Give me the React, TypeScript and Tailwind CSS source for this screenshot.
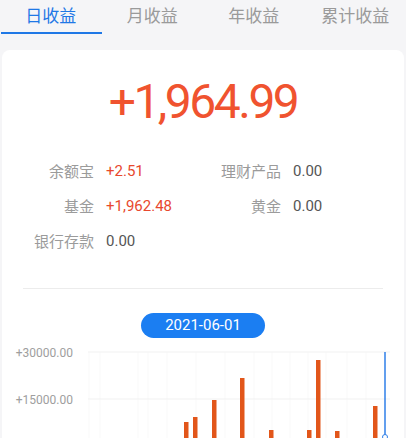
import React from 'react';

const TABS = ['日收益', '月收益', '年收益', '累计收益'];

const ROWS: { label: string; value: string; red?: boolean }[][] = [
  [
    { label: '余额宝', value: '+2.51', red: true },
    { label: '理财产品', value: '0.00' },
  ],
  [
    { label: '基金', value: '+1,962.48', red: true },
    { label: '黄金', value: '0.00' },
  ],
  [{ label: '银行存款', value: '0.00' }],
];

// bar x (page px) and top (page px); zero line sits at y=447, below the fold
const BARS = [
  { x: 184, top: 423 },
  { x: 193, top: 418 },
  { x: 212, top: 401 },
  { x: 240, top: 379 },
  { x: 269, top: 431 },
  { x: 307, top: 431 },
  { x: 316, top: 361 },
  { x: 335, top: 432 },
  { x: 373, top: 407 },
];

const GRID_X = [89, 100, 138, 148, 167, 196, 225, 254, 272, 290, 308, 326, 347, 366];

function Chart() {
  // svg starts at page x=2, y=342
  const ox = 2;
  const oy = 342;
  return (
    <svg width="402" height="110" viewBox="0 0 402 110" className="block mt-[3px]">
      {GRID_X.map(x => (
        <line key={x} x1={x - ox} x2={x - ox} y1={353 - oy} y2={110} stroke="#f9f9f9" strokeWidth="1" />
      ))}
      <line x1={88 - ox} x2={390 - ox} y1={353 - oy} y2={353 - oy} stroke="#f1f1f1" strokeWidth="1" />
      <line x1={88 - ox} x2={390 - ox} y1={400 - oy} y2={400 - oy} stroke="#f1f1f1" strokeWidth="1" />
      <text x={73 - ox} y={358 - oy} textAnchor="end" fontSize="12" fill="#9e9e9e" fontFamily="Roboto, 'Noto Sans', sans-serif">
        +30000.00
      </text>
      <text x={73 - ox} y={405 - oy} textAnchor="end" fontSize="12" fill="#9e9e9e" fontFamily="Roboto, 'Noto Sans', sans-serif">
        +15000.00
      </text>
      {BARS.map(b => (
        <rect key={b.x} x={b.x - ox} y={b.top - oy} width="4.5" height={447 - b.top} fill="#e2561a" />
      ))}
      <line x1={385 - ox} x2={385 - ox} y1={353 - oy} y2={110} stroke="#2f7fe8" strokeWidth="1.5" />
      <circle cx={385 - ox} cy={438 - oy} r="2.5" fill="#ffffff" stroke="#2f7fe8" strokeWidth="1" />
    </svg>
  );
}

export default function App() {
  return (
    <div
      className="w-[406px] h-[438px] overflow-hidden bg-[#f5f5f7]"
      style={{ fontFamily: "Roboto, 'Noto Sans CJK SC', sans-serif" }}
    >
      <div className="grid grid-cols-4 h-[34px]">
        {TABS.map((t, i) => (
          <div key={t} className="flex flex-col items-center">
            <div
              className={`h-[32px] flex items-center text-[17px] leading-none pb-[4px] ${
                i === 0 ? 'text-[#1f78e6]' : 'text-[#9a9a9a]'
              }`}
              style={{ fontFamily: "'Noto Sans CJK SC', sans-serif" }}
            >
              {t}
            </div>
            {i === 0 && <div className="h-[2px] w-full bg-[#1f78e6] ml-px" />}
          </div>
        ))}
      </div>

      <div className="mt-4 mx-0.5 bg-white rounded-lg h-[400px]">
        <div className="pt-[28px] flex justify-center">
          <span className="text-[48px] leading-none tracking-[-2.5px] text-[#f0532f]">+1,964.99</span>
        </div>

        <div className="mt-[28px] flex flex-col">
          {ROWS.map((row, ri) => (
            <div key={ri} className="h-[35px] grid grid-cols-2 items-center text-[15px]">
              {row.map((cell, ci) => (
                <div key={cell.label} className="flex items-center">
                  <span
                    className={`${ci === 0 ? 'w-[92px]' : 'w-[78px]'} text-right text-[#9b9b9b]`}
                    style={{ fontFamily: "'Noto Sans CJK SC', sans-serif" }}
                  >
                    {cell.label}
                  </span>
                  <span className={`ml-3 ${cell.red ? 'text-[#e8482e]' : 'text-[#555555]'}`}>{cell.value}</span>
                </div>
              ))}
            </div>
          ))}
        </div>

        <div className="mt-[29px] mx-[21px] h-px bg-[#ececec]" />

        <div className="mt-[24px] flex justify-center">
          <div className="w-[124px] h-[25px] rounded-full bg-[#1b7ef2] text-white text-[15px] flex items-center justify-center leading-none">
            2021-06-01
          </div>
        </div>

        <Chart />
      </div>
    </div>
  );
}
